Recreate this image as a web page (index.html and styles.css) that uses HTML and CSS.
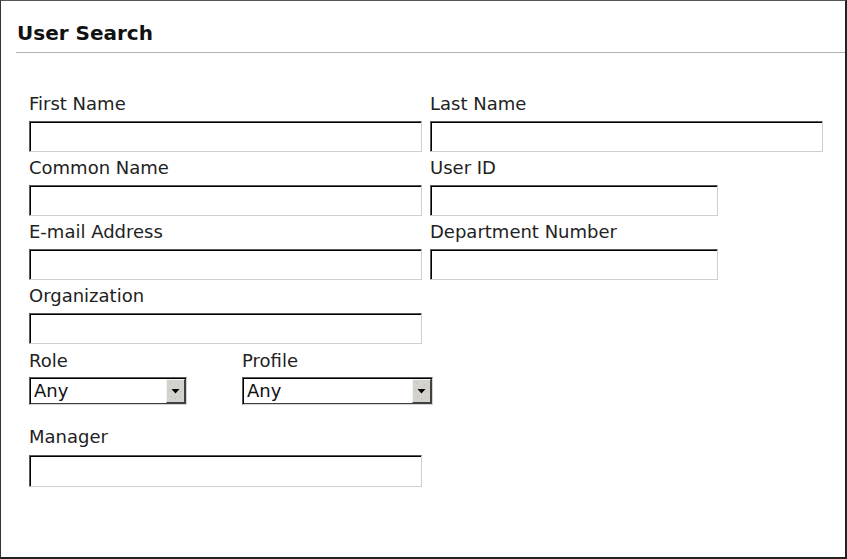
FILE: index.html
```html
<!DOCTYPE html>
<html>
<head>
<meta charset="utf-8">
<link rel="stylesheet" href="styles.css">
</head>
<body>
<div class="frame">
  <div class="header"><h2 class="title">User Search</h2></div>
  <form class="form">
    <div class="grid">
      <div class="field"><label class="lbl">First Name</label><input class="txt w-full" type="text"></div>
      <div class="field"><label class="lbl">Last Name</label><input class="txt w-full" type="text"></div>
      <div class="field"><label class="lbl">Common Name</label><input class="txt w-full" type="text"></div>
      <div class="field"><label class="lbl">User ID</label><input class="txt w-short" type="text"></div>
      <div class="field"><label class="lbl">E-mail Address</label><input class="txt w-full" type="text"></div>
      <div class="field"><label class="lbl">Department Number</label><input class="txt w-short" type="text"></div>
      <div class="field"><label class="lbl">Organization</label><input class="txt w-full" type="text"></div>
    </div>
    <div class="selects">
      <div class="field sel-role"><label class="lbl">Role</label>
        <span class="selwrap w-role"><select class="sel"><option>Any</option></select><span class="selbtn"><svg width="17" height="22" viewBox="0 0 17 22"><g fill="#b8b8b8"><rect x="3" y="3" width="1" height="1"/><rect x="11" y="5" width="1" height="1"/><rect x="4" y="16" width="1" height="1"/><rect x="12" y="17" width="1" height="1"/><rect x="8" y="18" width="1" height="1"/><rect x="2" y="10" width="1" height="1"/><rect x="13" y="11" width="1" height="1"/></g><path d="M4.5 9h8l-4 4.5z" fill="#000"/></svg></span></span>
      </div>
      <div class="field"><label class="lbl">Profile</label>
        <span class="selwrap w-profile"><select class="sel"><option>Any</option></select><span class="selbtn"><svg width="17" height="22" viewBox="0 0 17 22"><g fill="#b8b8b8"><rect x="3" y="3" width="1" height="1"/><rect x="11" y="5" width="1" height="1"/><rect x="4" y="16" width="1" height="1"/><rect x="12" y="17" width="1" height="1"/><rect x="8" y="18" width="1" height="1"/><rect x="2" y="10" width="1" height="1"/><rect x="13" y="11" width="1" height="1"/></g><path d="M4.5 9h8l-4 4.5z" fill="#000"/></svg></span></span>
      </div>
    </div>
    <div class="field mgr"><label class="lbl">Manager</label><input class="txt w-full" type="text"></div>
  </form>
</div>
</body>
</html>
```

FILE: styles.css
```css
html, body {
  margin: 0;
  padding: 0;
  background: #fff;
}
body {
  font-family: "DejaVu Sans", Verdana, sans-serif;
  color: #1a1a1a;
}
.frame {
  box-sizing: border-box;
  width: 847px;
  height: 559px;
  border-top: 1px solid #555;
  border-left: 1px solid #333;
  border-right: 2px solid #222;
  border-bottom: 2px solid #222;
  background: #fff;
}
.header {
  margin-left: 15px;
  padding-top: 20px;
  padding-bottom: 7px;
  border-bottom: 1px solid #b0b0b0;
}
.title {
  margin: 0;
  font-size: 20px;
  line-height: 24px;
  font-weight: bold;
  color: #111;
  padding-left: 1px;
}
.form {
  padding-left: 28px;
  padding-top: 40px;
  margin: 0;
}
.grid {
  display: grid;
  grid-template-columns: 392px 393px;
  column-gap: 9px;
  row-gap: 5px;
}
.field {
  display: flex;
  flex-direction: column;
  align-items: flex-start;
}
.lbl {
  font-size: 18px;
  line-height: 22px;
  margin-bottom: 6px;
  color: #222;
}
.txt {
  box-sizing: border-box;
  height: 31px;
  margin: 0;
  padding: 0 4px;
  font-family: inherit;
  font-size: 18px;
  border-style: solid;
  border-width: 1px;
  border-color: #5a5a5a #cfcfcf #cfcfcf #5a5a5a;
  box-shadow: inset 1px 1px 0 #000;
  background: #fff;
  outline: none;
}
.w-full { width: 393px; }
.w-short { width: 288px; }
.selects {
  display: flex;
  margin-top: 6px;
}
.sel-role {
  width: 213px;
}
.selects .lbl {
  margin-bottom: 5px;
}
.selwrap {
  position: relative;
  display: block;
  height: 28px;
}
.w-role { width: 158px; }
.w-profile { width: 191px; }
.sel {
  -webkit-appearance: none;
  appearance: none;
  box-sizing: border-box;
  width: 100%;
  height: 28px;
  margin: 0;
  padding: 0 0 0 4px;
  font-family: inherit;
  font-size: 18px;
  line-height: 24px;
  color: #111;
  background: #fff;
  border-style: solid;
  border-width: 1px;
  border-color: #5a5a5a #d4d4d4 #d4d4d4 #5a5a5a;
  box-shadow: inset 1px 1px 0 #000, inset -1px -1px 0 #404040;
  border-radius: 0;
  outline: none;
}
.selbtn {
  position: absolute;
  right: 2px;
  top: 2px;
  width: 19px;
  height: 24px;
  box-sizing: border-box;
  background: #d4d2cd;
  border-style: solid;
  border-width: 1px;
  border-color: #f4f4f4 #404040 #404040 #f4f4f4;
  display: flex;
  align-items: center;
  justify-content: center;
}
.selbtn svg {
  display: block;
}
.mgr {
  margin-top: 21px;
}
.mgr .lbl {
  margin-bottom: 7px;
}
.mgr .txt {
  height: 32px;
}
```
